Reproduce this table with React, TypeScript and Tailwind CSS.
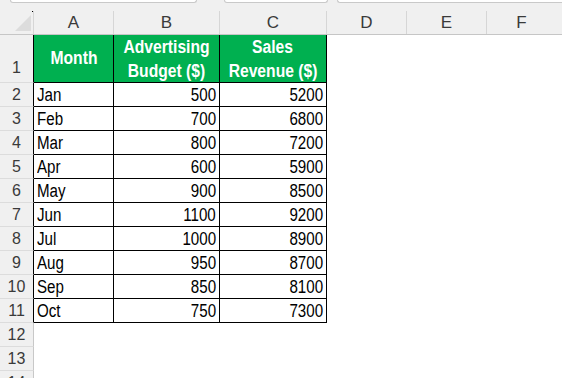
import React from "react";

type Row = { month: string; budget: number; revenue: number };

const rows: Row[] = [
  { month: "Jan", budget: 500, revenue: 5200 },
  { month: "Feb", budget: 700, revenue: 6800 },
  { month: "Mar", budget: 800, revenue: 7200 },
  { month: "Apr", budget: 600, revenue: 5900 },
  { month: "May", budget: 900, revenue: 8500 },
  { month: "Jun", budget: 1100, revenue: 9200 },
  { month: "Jul", budget: 1000, revenue: 8900 },
  { month: "Aug", budget: 950, revenue: 8700 },
  { month: "Sep", budget: 850, revenue: 8100 },
  { month: "Oct", budget: 750, revenue: 7300 },
];

const font = "font-['Liberation_Sans',Arial,sans-serif]";

// Excel's narrow cell font, approximated by squeezing Liberation Sans
const Narrow = ({ children, origin }: { children: React.ReactNode; origin: string }) => (
  <span className={`inline-block whitespace-nowrap scale-x-[0.84] ${origin}`}>{children}</span>
);

const Bold = ({ children }: { children: React.ReactNode }) => (
  <span className="inline-block whitespace-nowrap scale-x-[0.87] origin-center">{children}</span>
);

const ColHead = ({ label, w }: { label: string; w: string }) => (
  <div
    className={`${w} shrink-0 h-full flex items-center justify-center border-r border-[#d6d6d6] text-[17px] text-[#3a3a3a]`}
  >
    {label}
  </div>
);

const RowHead = ({ n, table, tall }: { n: number; table?: boolean; tall?: boolean }) => (
  <div
    className={`w-[34px] shrink-0 h-full flex justify-center border-r border-b border-b-[#dcdcdc] bg-[#f0f0f0] text-[16px] text-[#3a3a3a] ${
      table ? "border-r-black" : "border-r-[#c8c8c8]"
    } ${tall ? "items-end pb-[2px]" : "items-center"}`}
  >
    {n}
  </div>
);

export default function App() {
  return (
    <div className={`w-[562px] h-[378px] overflow-hidden bg-white ${font}`}>
      {/* formula bar edges */}
      <div className="h-[11px] bg-[#f0f0f0] flex">
        <div className="w-[10px] shrink-0" />
        <div className="w-[187px] h-[3px] shrink-0 bg-white border-x border-b border-[#c9c9c9] rounded-b-[4px]" />
        <div className="w-[27px] shrink-0" />
        <div className="w-[104px] h-[3px] shrink-0 bg-white border-x border-b border-[#c9c9c9] rounded-b-[4px]" />
        <div className="w-[9px] shrink-0" />
        <div className="flex-1 h-[3px] bg-white border-l border-b border-[#c9c9c9] rounded-bl-[4px]" />
      </div>

      {/* column headers */}
      <div className="h-[24px] flex bg-[#f0f0f0] border-b border-[#c6c6c6]">
        <div className="w-[34px] shrink-0 h-full relative border-r border-[#d6d6d6]">
          <svg className="absolute left-[15px] top-[4px]" width="16" height="16" viewBox="0 0 16 16">
            <polygon points="16,0 16,16 0,16" fill="#dcdcdc" />
          </svg>
          <div className="absolute right-0 top-0 w-[1px] h-[1px] bg-black" />
        </div>
        <ColHead label="A" w="w-[80px]" />
        <ColHead label="B" w="w-[106px]" />
        <ColHead label="C" w="w-[107px]" />
        <ColHead label="D" w="w-[80px]" />
        <ColHead label="E" w="w-[80px]" />
        <div className="flex-1 h-full flex items-center justify-center text-[17px] text-[#3a3a3a] pr-[6px]">
          F
        </div>
      </div>

      {/* header row */}
      <div className="h-[48px] flex">
        <RowHead n={1} table tall />
        <div className="w-[80px] shrink-0 h-full bg-[#00b050] border-r border-b border-black flex items-center justify-center text-white font-bold text-[18px]">
          <Bold>Month</Bold>
        </div>
        <div className="w-[106px] shrink-0 h-full bg-[#00b050] border-r border-b border-black flex flex-col items-center justify-center text-white font-bold text-[18px] leading-[24px]">
          <Bold>Advertising</Bold>
          <Bold>Budget ($)</Bold>
        </div>
        <div className="w-[107px] shrink-0 h-full bg-[#00b050] border-r border-b border-black flex flex-col items-center justify-center text-white font-bold text-[18px] leading-[24px]">
          <Bold>Sales</Bold>
          <Bold>Revenue ($)</Bold>
        </div>
      </div>

      {/* data rows */}
      {rows.map((r, i) => (
        <div key={r.month} className="h-[24px] flex text-[18px] leading-[22px] text-black">
          <RowHead n={i + 2} table />
          <div className="w-[80px] shrink-0 h-full border-r border-b border-black flex items-center pl-[3px]">
            <Narrow origin="origin-left">{r.month}</Narrow>
          </div>
          <div className="w-[106px] shrink-0 h-full border-r border-b border-black flex items-center justify-end pr-[3px]">
            <Narrow origin="origin-right">{r.budget}</Narrow>
          </div>
          <div className="w-[107px] shrink-0 h-full border-r border-b border-black flex items-center justify-end pr-[3px]">
            <Narrow origin="origin-right">{r.revenue}</Narrow>
          </div>
        </div>
      ))}

      {[12, 13, 14].map((n) => (
        <div key={n} className="h-[24px] flex">
          <RowHead n={n} />
        </div>
      ))}
    </div>
  );
}
